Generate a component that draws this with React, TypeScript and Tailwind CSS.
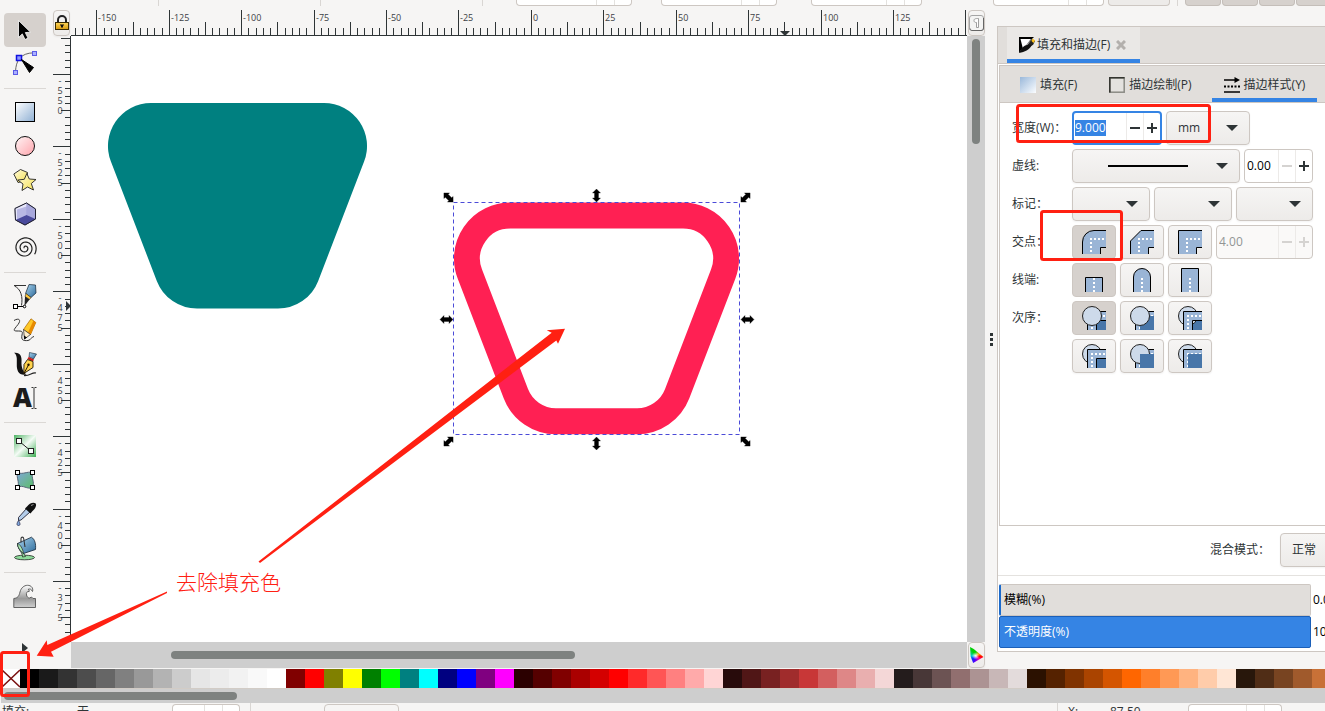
import { useEffect, useRef } from 'react'
import type { ReactNode } from 'react'
import clsx from 'clsx'

const PALETTE = [
  '#000000', '#1a1a1a', '#333333', '#4d4d4d', '#666666', '#808080', '#999999', '#b3b3b3', '#cccccc', '#e6e6e6',
  '#ececec', '#f2f2f2', '#f9f9f9', '#ffffff', '#800000', '#ff0000', '#808000', '#ffff00', '#008000', '#00ff00',
  '#008080', '#00ffff', '#000080', '#0000ff', '#800080', '#ff00ff', '#2b0000', '#550000', '#800000', '#aa0000',
  '#d40000', '#ff0000', '#ff2a2a', '#ff5555', '#ff8080', '#ffaaaa', '#ffd5d5', '#280b0b', '#501616', '#782121',
  '#a02c2c', '#c83737', '#d35f5f', '#de8787', '#e9afaf', '#f4d7d7', '#241c1c', '#483737', '#6c5353', '#916f6f',
  '#ac9393', '#c8b7b7', '#e3dbdb', '#2b1100', '#552200', '#803300', '#aa4400', '#d45500', '#ff6600', '#ff7f2a',
  '#ff9955', '#ffb380', '#ffccaa', '#ffe6d5', '#28170b', '#502d16', '#784421', '#a05a2c', '#c87137', '#d38d5f',
]

// 2.5mm per tick
const TICK = 7.243
const TRAPEZOID =
  'M151 103H324A43 43 0 0 1 364.1 161.6L318.1 281.200A43 43 0 0 1 278 308.600H197A43 43 0 0 1 156.9 281.200L110.9 161.6A43 43 0 0 1 151 103Z'

// Archimedean spiral, clockwise from the centre
const SPIRAL = Array.from({ length: 91 }, (_, i) => {
  const turn = (i / 90) * ((2.55 + 0.07) * Math.PI * 2) + 0.05
  const r = 0.6 + (i / 90) * 10.9
  const a = turn + Math.PI * 0.93
  return `${(12 + r * Math.cos(a)).toFixed(2)},${(12 + r * Math.sin(a)).toFixed(2)}`
}).join(' ')

const BUTTON = 'rounded border border-[#cdc7c2] bg-linear-to-b from-[#f6f5f4] to-[#edebe9] shadow-xs'

/* ---------- tool icons ---------- */

const tools: ({ name: string; icon: ReactNode } | null)[] = [
  {
    name: '选择',
    icon: <path d="M5.500 2.500v17l3.800-3.600 2.700 5.600 3-1.400-2.700-5.500 5.200-.4z" fill="#000" stroke="#fff" strokeWidth=".8" />,
  },
  {
    name: '节点',
    icon: (
      <>
        <path d="M2.500 19.500C3 9 7 1 21 .8" fill="none" stroke="#666" />
        <g fill="#aab0ff" stroke="#5b5be6">
          <rect x="19.500" y="-.5" width="4" height="4" />
          <rect x=".5" y="18.500" width="4" height="4" />
          <rect x="3.500" y="3.500" width="5" height="5" fill="#8d97ff" stroke="#1010e0" strokeWidth="1.500" />
        </g>
        <path d="M8.500 7.500 20.500 15.500 16.500 20.500Z" fill="#000" stroke="#000" />
      </>
    ),
  },
  null,
  { name: '矩形', icon: <rect x="2.500" y="2.500" width="19" height="19" fill="url(#blue)" stroke="#000" /> },
  { name: '圆形', icon: <circle cx="12" cy="12" r="9.500" fill="url(#pink)" stroke="#111" /> },
  {
    name: '星形',
    icon: (
      <g fill="url(#yellow)" stroke="#222" strokeWidth=".9" strokeLinejoin="round">
        <path d="M.8 6 7.500 1.500 14.500 4.500 13.500 12.500 5 14.500Z" />
        <path d="M13.800 5.500 16.300 11 23 11.500 18.300 15.500 20.500 22 14.500 19 9 22.500 10 16 4.800 12 11.300 11.300Z" />
      </g>
    ),
  },
  {
    name: '3D 盒子',
    icon: (
      <g stroke="#223" strokeWidth=".7" strokeLinejoin="round">
        <path d="M2 6.500 13.500 1 22.500 7 22.500 17 12 23 2.500 18Z" fill="#b8b8e6" />
        <path d="M2 6.500 13.500 1V13L2.500 18Z" fill="#e6e6fa" stroke="none" />
        <path d="M13.500 1 22.500 7V17L13.500 13Z" fill="#a8a8dc" stroke="none" />
        <path d="M2.500 18 13.500 13 22.500 17 12 23Z" fill="#4a4a9c" stroke="none" />
        <path d="M4 7.500 13.500 4.500V13L4 17.500Z" fill="#7474c4" fillOpacity=".4" stroke="none" />
        <path d="M2 6.500 13.500 1 22.500 7 22.500 17 12 23 2.500 18Z" fill="none" strokeWidth="1" />
      </g>
    ),
  },
  { name: '螺旋', icon: <polyline points={SPIRAL} fill="none" stroke="#222" strokeWidth="1.200" /> },
  null,
  {
    name: '钢笔',
    icon: (
      <>
        <path d="M1 1.500H13M1.500 2C8 5 10 13 8.500 21.500" fill="none" stroke="#333" />
        <path d="M16 .5 22.500 1 23 9 18 13.500 12.500 9.500Z" fill="url(#steel)" stroke="#123" strokeWidth=".7" />
        <path d="M13 9.500 18 13.500 16.500 15.500 12 12.500Z" fill="#ffc83a" stroke="#222" strokeWidth=".6" />
        <path d="M12 12.500 16.500 15.500 11.500 22Z" fill="#222" />
        <path d="M3 22.500H11" stroke="#000" />
        <rect x="0.500" y="20.500" width="4" height="4" fill="#fff" stroke="#000" />
        <circle cx="11.500" cy="22.500" r="1.300" fill="#fff" stroke="#000" />
      </>
    ),
  },
  {
    name: '铅笔',
    icon: (
      <>
        <path d="M1 2.500C6-.5 8.500 2 5 6.500S-1 13 4 13s6 0 5 4c-1 5 1 6 6 5.500 3-.3 3.500-4 6-4" fill="none" stroke="#333" />
        <path d="M18 .8 22.800 4.500 17.500 16.500 10.500 11.500Z" fill="#ffc928" stroke="#a66300" strokeWidth=".7" />
        <path d="M20.500 2.500 22.800 4.500 17.500 16.500 15 14.500Z" fill="#e88a00" />
        <path d="M10.500 11.500 17.500 16.500 11.500 21Z" fill="#ffeecb" stroke="#222" strokeWidth=".7" />
        <path d="M11 17.500 14 19.500 11.200 21.500Z" fill="#000" />
      </>
    ),
  },
  {
    name: '书法',
    icon: (
      <>
        <path d="M1 .8C7 0 9 4 8.500 10c-.3 5 1.500 10 5 12.500C6 24 3.500 19 3.800 12 4 6 4 3 1 .8Z" fill="#111" />
        <path d="M11 23.500c6 .5 8-3.500 12-2.500" fill="none" stroke="#222" strokeWidth="1.200" />
        <path d="M16.500.5 23.500 2 20.500 7 16 5Z" fill="url(#steel)" stroke="#123" strokeWidth=".6" />
        <path d="M15.500 5 21 7.500 20 9.500 14.500 7Z" fill="#d01818" />
        <path d="M14.500 7.500 20 9.500 20 15.500 10.800 21.500 11 12.500Z" fill="#ffd34d" stroke="#221600" strokeWidth=".9" />
        <path d="M11 21.300 15.500 13" stroke="#221600" />
        <circle cx="15.500" cy="12.800" r="1.200" fill="#221600" />
      </>
    ),
  },
  {
    name: '文本',
    icon: (
      <>
        <text x="0" y="21" fontSize="26" fontWeight="800" fontFamily="Open Sans" fill="#1c1c1c">A</text>
        <path d="M18.500 1.500H20.500M21.500 1.500H23.500M21 2V22M18.500 22.500H20.500M21.500 22.500H23.500" stroke="#333" />
      </>
    ),
  },
  null,
  {
    name: '渐变',
    icon: (
      <>
        <rect x="1" y="1" width="22" height="22" fill="url(#green)" />
        <path d="M6.500 7.500 18.500 17.500" stroke="#222" />
        <g fill="#fff" stroke="#222">
          <rect x="3.500" y="4.500" width="5" height="5" />
          <rect x="15.500" y="14.500" width="5" height="5" />
        </g>
      </>
    ),
  },
  {
    name: '网格',
    icon: (
      <>
        <path d="M4.500 4.500C10 7 14 3 19.500 4.500 18 10 22 14 19.500 19.500 14 22 10 16 4.500 19.500 7 14 3 10 4.500 4.500Z" fill="url(#mesh)" stroke="#567" />
        <g fill="#fff" stroke="#000">
          <rect x="2.500" y="2.500" width="4" height="4" />
          <rect x="17.500" y="2.500" width="4" height="4" />
          <rect x="2.500" y="17.500" width="4" height="4" />
          <rect x="17.500" y="17.500" width="4" height="4" />
        </g>
      </>
    ),
  },
  {
    name: '取色',
    icon: (
      <>
        <path d="M13.500 6.500 17 10 8 18 5.500 18.500 5.500 15.500Z" fill="#b4cdea" stroke="#223" strokeWidth=".9" />
        <path d="M12 6.500 14.500 4C15.500 2 20-.5 22.500 1.200 24.500 4 21 8 19.500 9L17.500 11.500Z" fill="#111" />
        <path d="M18 3.500 20.500 2.500" stroke="#999" />
        <path d="M5.500 18.500C7.500 21.500 7.500 23.500 5.500 23.500S3.500 21.500 5.500 18.500Z" fill="#7fa6dc" stroke="#224" strokeWidth=".7" />
      </>
    ),
  },
  {
    name: '油漆桶',
    icon: (
      <>
        <ellipse cx="11.500" cy="21.500" rx="10" ry="2.300" fill="#8fdc9c" stroke="#222" strokeWidth=".8" />
        <path d="M4.500 7.500C6 12 8.500 15.500 10.500 17L12.500 20.500 9.500 21C10 17 5 14 4.500 7.500Z" fill="#8fdc9c" stroke="#222" strokeWidth=".7" />
        <path d="M4.500 7.500 18.500 1.200C22 3.500 23 8 22.500 13.500L10.500 17.500C7 15 4.500 11 4.500 7.500Z" fill="url(#steel)" stroke="#123" strokeWidth=".8" />
        <path d="M4.500 7.500C7 8 10 13 10.500 17.500 7 15 4.500 11 4.500 7.500Z" fill="#a7e6b0" stroke="#222" strokeWidth=".7" />
        <path d="M8 6.500V3C8 .5 10.500.5 10.800 3L12 11" fill="none" stroke="#333" strokeWidth="1.100" />
      </>
    ),
  },
  null,
  {
    name: '调整',
    icon: (
      <path
        d="M.8 23.500V14.500C5 14 6 12 7 8 8 4 11 1.300 14.500 1.300c4 0 6 3 5 6.200C18.500 5 16.500 4.500 15 5.500c1 .3 1.500 1 1.200 2C14 7 13 9 13.500 11c.4 1.800 1.500 3 3 3l2-1 1.500 1.500H22.500V23.500Z"
        fill="url(#grey)"
        stroke="#555"
        strokeWidth=".9"
      />
    ),
  },
]

function SharedGradients() {
  return (
    <svg className="absolute size-0" aria-hidden="true">
      <defs>
        <linearGradient id="blue" x1="0" y1="0" x2="1" y2="1">
          <stop offset="0" stopColor="#ffffff" />
          <stop offset="1" stopColor="#8fb0d4" />
        </linearGradient>
        <linearGradient id="blueDown" x1="0" y1="0" x2="1" y2="1">
          <stop offset="0" stopColor="#9ab8da" />
          <stop offset="1" stopColor="#fbfdff" />
        </linearGradient>
        <linearGradient id="pink" x1="0" y1="0" x2="1" y2="1">
          <stop offset="0" stopColor="#fff5f5" />
          <stop offset="1" stopColor="#ffa4ac" />
        </linearGradient>
        <linearGradient id="yellow" x1="0" y1="0" x2="1" y2="1">
          <stop offset="0" stopColor="#fffbe0" />
          <stop offset="1" stopColor="#f5e04e" />
        </linearGradient>
        <linearGradient id="steel" x1="0" y1="0" x2="1" y2="1">
          <stop offset="0" stopColor="#a9d4ee" />
          <stop offset="1" stopColor="#2d6a9a" />
        </linearGradient>
        <linearGradient id="green" x1="0" y1="0" x2="1" y2="1">
          <stop offset="0" stopColor="#4fb465" />
          <stop offset=".5" stopColor="#f4fbf5" />
          <stop offset="1" stopColor="#3fae55" />
        </linearGradient>
        <linearGradient id="mesh" x1="0" y1="0" x2="1" y2="1">
          <stop offset="0" stopColor="#7fa6d8" />
          <stop offset="1" stopColor="#5cbf68" />
        </linearGradient>
        <linearGradient id="grey" x1="0" y1="0" x2="0" y2="1">
          <stop offset="0" stopColor="#ffffff" />
          <stop offset=".6" stopColor="#999999" />
          <stop offset="1" stopColor="#d0d0d0" />
        </linearGradient>
        <linearGradient id="gold" x1="0" y1="0" x2="0" y2="1">
          <stop offset="0" stopColor="#ffd75a" />
          <stop offset="1" stopColor="#d79a10" />
        </linearGradient>
      </defs>
    </svg>
  )
}

function Toolbox() {
  return (
    <nav className="flex w-[53px] shrink-0 flex-col pt-[7px] pr-[7px] pl-1">
      {tools.map((tool, i) =>
        tool ? (
          <button
            key={tool.name}
            aria-label={tool.name}
            className={clsx('flex h-[34px] shrink-0 items-center justify-center rounded', i === 0 && 'bg-[#d6d1cd]')}
          >
            <svg width="24" height="24" viewBox="0 0 24 24" className="overflow-visible">
              {tool.icon}
            </svg>
          </button>
        ) : (
          <hr key={i} className="mt-[7px] mb-1.5 h-px shrink-0 border-0 bg-[#dbd8d5]" />
        ),
      )}
      <button aria-label="更多工具" className="mt-[26px] flex shrink-0 justify-center py-1">
        <svg width="6" height="10" viewBox="0 0 6 10">
          <path d="M0 0 6 5 0 10Z" fill="#2e3436" />
        </svg>
      </button>
    </nav>
  )
}

/* ---------- rulers ---------- */

const tickStart = (k: number, major: number, mid: number, minor: number) =>
  k % 10 === 0 ? major : k % 5 === 0 ? mid : minor

function HorizontalRuler() {
  const ticks = Array.from({ length: 260 }, (_, i) => i - 63)
  return (
    <svg className="h-[26px] min-w-0 flex-1 text-[9px]" aria-hidden="true">
      {ticks.map(k => {
        const x = Math.floor(460.4 + k * TICK)
        const top = tickStart(k, 0, 12, 18)
        return (
          <g key={k}>
            <rect x={x} y={top} width="1" height={26 - top} fill="#2e3436" />
            {k % 10 === 0 && Math.abs(k * 2.5) <= 150 && k < 60 && (
              <text x={x + 2} y="11" fill="#3c4144">{k * 2.5}</text>
            )}
          </g>
        )
      })}
      <rect x="0" y="25" width="100%" height="1" fill="#2e3436" />
      <path d="M709 21H719L714 26Z" fill="#2e3436" />
    </svg>
  )
}

function VerticalRuler() {
  const ticks = Array.from({ length: 180 }, (_, i) => i - 5)
  return (
    <svg className="h-full w-[18px] shrink-0 text-[9px]" aria-hidden="true">
      {ticks.map(k => {
        const y = Math.floor(38.5 + k * TICK)
        const left = tickStart(k, 0, 8, 12)
        return (
          <g key={k}>
            <rect x={left} y={y} width={18 - left} height="1" fill="#2e3436" />
            {k % 10 === 0 && k <= 70 &&
              String(-550 + k * 2.5).split('').map((c, i) => (
                <text key={i} x="7" y={y + 10 + i * 10} textAnchor="middle" fill="#3c4144">{c}</text>
              ))}
          </g>
        )
      })}
      <rect x="17" y="0" width="1" height="100%" fill="#2e3436" />
      <path d="M13 265V275L18 270Z" fill="#2e3436" />
    </svg>
  )
}

/* ---------- canvas ---------- */

const handles = [
  [448.5, 197.5, -45], [596.5, 195.5, 0], [745.5, 197.5, 45],
  [446.5, 319.5, 90], [747.5, 319.5, 90],
  [448.5, 441.5, 45], [596.5, 443.5, 0], [745.5, 441.5, -45],
]

function Canvas() {
  return (
    <svg className="h-full min-w-0 flex-1 bg-white" role="img" aria-label="画布">
      <g transform="translate(-71 -36)">
        <path d={TRAPEZOID} fill="#008080" />
        <path d={TRAPEZOID} transform="translate(359 112.600)" fill="none" stroke="#ff2053" strokeWidth="26" />
        <rect x="453.500" y="202.500" width="286" height="232" fill="none" stroke="#4b4bd8" strokeDasharray="4 3" />
        {handles.map(([x, y, r], i) => (
          <path
            key={i}
            transform={`translate(${x} ${y}) rotate(${r})`}
            d="M0-6.500 4-2.500H2V2.500H4L0 6.500-4 2.500H-2V-2.500H-4Z"
            fill="#000"
            stroke="#000"
            strokeWidth=".3"
          />
        ))}
      </g>
    </svg>
  )
}

function CanvasArea() {
  return (
    <main className="mb-px flex min-w-0 flex-1 flex-col pt-1">
      <div className="flex h-[26px] shrink-0">
        <button aria-label="锁定参考线" className={clsx(BUTTON, 'mr-px flex w-[17px] shrink-0 items-center justify-center')}>
          <svg width="14" height="16" viewBox="0 0 14 16" className="shrink-0">
            <path d="M3 8V5a4 4 0 0 1 8 0V8" fill="none" stroke="#222" strokeWidth="2" />
            <rect x=".5" y="7.500" width="13" height="7" fill="url(#gold)" stroke="#3a2c00" />
            <path d="M6 9.500H8V12.500H6ZM5 9.500H9V10.500H5Z" fill="#111" />
          </svg>
        </button>
        <HorizontalRuler />
        <button aria-label="粘滞缩放" className={clsx(BUTTON, 'ml-px flex w-[17px] shrink-0 items-center justify-center')}>
          <svg width="15" height="16" viewBox="0 0 15 16" className="shrink-0">
            <rect x=".5" y=".5" width="14" height="15" rx="2.500" fill="#f4f4f3" stroke="#a5a5a5" />
            <path d="M1 13.500C1 15 2 15.500 3 15.500H12C13.500 15.500 14.500 15 14.500 13V3" fill="none" stroke="#666" />
            <path d="M5 5.500C5 4 6 3.500 9.500 3.500V12.500H7.500V7.500C6 7.500 5 7 5 5.500Z" fill="#fff" stroke="#888" strokeWidth=".8" />
          </svg>
        </button>
      </div>
      <div className="flex min-h-0 flex-1">
        <VerticalRuler />
        <Canvas />
        <div className="w-[18px] shrink-0 bg-[#cecece] px-[5px] pt-[3px]">
          <div className="h-[105px] rounded-full bg-[#7e8280]" />
        </div>
      </div>
      <div className="flex h-[26px] shrink-0">
        <div className="w-[18px] shrink-0" />
        <div className="flex min-w-0 flex-1 items-center bg-[#cecece] pl-[100px]">
          <div className="h-2 w-[404px] rounded-full bg-[#7e8280]" />
        </div>
        <button aria-label="色彩管理" className={clsx(BUTTON, 'ml-px flex w-[17px] shrink-0 items-center justify-center')}>
          <span className="h-4 w-3.5 shrink-0 bg-[radial-gradient(circle_at_40%_55%,white,transparent_30%),conic-gradient(from_0deg_at_40%_55%,#00d000,#ffb000_60deg,#ff0000_100deg,#ff00a0_130deg,#5000ff_190deg,#0030ff_225deg,#00d0d0_270deg,#00d000_330deg)] [clip-path:polygon(4%_0,30%_12%,100%_62%,26%_100%,8%_60%)]" />
        </button>
      </div>
    </main>
  )
}

/* ---------- fill and stroke panel ---------- */

interface SelectBoxProps {
  label: string
  value?: string
  className: string
  children?: ReactNode
}

function SelectBox({ label, value = '', className, children }: SelectBoxProps) {
  return (
    <div className={clsx('relative h-[34px]', className)}>
      <select aria-label={label} className={clsx(BUTTON, 'h-full w-full appearance-none pl-[11px] text-xs')}>
        <option>{value}</option>
      </select>
      {children}
      <svg width="12" height="6" viewBox="0 0 12 6" className="pointer-events-none absolute top-3.5 right-3">
        <path d="M0 0H12L6 6Z" fill="#2e3436" />
      </svg>
    </div>
  )
}

interface SpinProps {
  label: string
  value: string
  className: string
  focused?: boolean
  disabled?: boolean
  minusOff?: boolean
}

function SpinBox({ label, value, className, focused, disabled, minusOff }: SpinProps) {
  const ref = useRef<HTMLInputElement>(null)

  useEffect(() => {
    if (focused) ref.current?.select()
  }, [focused])

  return (
    <div
      className={clsx(
        'flex h-[34px] overflow-hidden rounded',
        focused ? 'border-2 border-[#3584e4] bg-white' : 'border border-[#cdc7c2]',
        disabled ? 'bg-[#faf9f8] text-[#929595]' : 'bg-white text-black',
        className,
      )}
    >
      <input
        ref={ref}
        aria-label={label}
        defaultValue={value}
        disabled={disabled}
        className={clsx('min-w-0 flex-1 text-xs outline-none selection:bg-[#3584e4] selection:text-white', focused ? 'pl-px' : 'pl-0.5')}
      />
      <button
        aria-label="减少"
        disabled={disabled || minusOff}
        className="flex w-[17px] shrink-0 items-center justify-center border-l border-[#eceae8] text-[#2e3436] disabled:text-[#d5d3d1]"
      >
        <svg width="10" height="10" viewBox="0 0 10 10"><path d="M0 5H10" stroke="currentColor" strokeWidth="2" /></svg>
      </button>
      <button
        aria-label="增加"
        disabled={disabled}
        className="flex w-[17px] shrink-0 items-center justify-center border-l border-[#eceae8] text-[#2e3436] disabled:text-[#d5d3d1]"
      >
        <svg width="10" height="10" viewBox="0 0 10 10"><path d="M0 5H10M5 0V10" stroke="currentColor" strokeWidth="2" /></svg>
      </button>
    </div>
  )
}

function IconToggle({ label, active, children }: { label: string; active?: boolean; children: ReactNode }) {
  return (
    <button
      aria-label={label}
      aria-pressed={!!active}
      className={clsx(
        'flex h-[34px] w-11 items-center justify-center',
        active ? 'rounded border border-[#cdc7c2] bg-[#d6d1cd]' : BUTTON,
      )}
    >
      <svg width="24" height="24" viewBox="0 0 24 24">{children}</svg>
    </button>
  )
}

function JoinIcon({ outline }: { outline: string }) {
  return (
    <>
      <path d={`${outline}H24V17.500H18.500V24H.5Z`} fill="#9ab5d6" />
      <path d={`${outline}H24M24 17.500H18.500V24`} fill="none" stroke="#000" />
      <path d="M8 9H24M9 12V24" stroke="#fff" strokeWidth="2" strokeDasharray="2 2" />
    </>
  )
}

function CapIcon({ outline }: { outline: string }) {
  return (
    <>
      <path d={outline} fill="#9ab5d6" stroke="#000" />
      <path d="M12 10V24" stroke="#fff" strokeWidth="2" strokeDasharray="2 2" />
    </>
  )
}

const layers: Record<string, ReactNode> = {
  F: <rect key="F" x="10" y="10" width="14" height="14" fill="#4876a9" />,
  S: (
    <g key="S">
      <path d="M5.500 24V5.500H24V14.500H14.500V24Z" fill="#9ab5d6" />
      <path d="M5.500 24V5.500H24M24 14.500H14.500V24" fill="none" stroke="#000" />
      <path d="M9 10H24M10 13V24" stroke="#fff" strokeWidth="2" strokeDasharray="2 2" />
    </g>
  ),
  M: <circle key="M" cx="10" cy="10" r="9.500" fill="#cddaea" stroke="#222" />,
}

function OrderToggle({ order, active }: { order: string; active?: boolean }) {
  return (
    <IconToggle label={`次序 ${order}`} active={active}>
      {order.split('').map(l => layers[l])}
    </IconToggle>
  )
}

function Row({ label, children }: { label: string; children: ReactNode }) {
  return (
    <div className="flex items-center">
      <span className="w-[60px] shrink-0 whitespace-nowrap">{label}</span>
      <div className="flex gap-1">{children}</div>
    </div>
  )
}

function StrokeStyle() {
  return (
    <div className="flex flex-1 flex-col gap-1 py-2 pl-3">
      <Row label="宽度(W)：">
        <SpinBox label="宽度" value="9.000" className="w-[90px]" focused />
        <SelectBox label="单位" value="mm" className="w-[84px]" />
      </Row>
      <Row label="虚线:">
        <SelectBox label="虚线" className="w-[168px]">
          <svg width="80" height="2" className="pointer-events-none absolute top-4 left-9">
            <rect width="80" height="2" />
          </svg>
        </SelectBox>
        <SpinBox label="虚线偏移" value="0.00" className="w-[69px]" minusOff />
      </Row>
      <Row label="标记：">
        <SelectBox label="起始标记" className="w-[78px]" />
        <SelectBox label="中间标记" className="w-[78px]" />
        <SelectBox label="末端标记" className="w-[77px]" />
      </Row>
      <Row label="交点：">
        <IconToggle label="圆角" active><JoinIcon outline="M.5 24V12A11.500 11.500 0 0 1 12 .5" /></IconToggle>
        <IconToggle label="斜角"><JoinIcon outline="M.5 24V11L11 .5" /></IconToggle>
        <IconToggle label="尖角"><JoinIcon outline="M.5 24V.5" /></IconToggle>
        <SpinBox label="尖角限制" value="4.00" className="w-[97px]" disabled />
      </Row>
      <Row label="线端:">
        <IconToggle label="平头" active><CapIcon outline="M3.500 24V9.500H20.500V24" /></IconToggle>
        <IconToggle label="圆头"><CapIcon outline="M3.500 24V9A8.500 8.500 0 0 1 20.500 9V24" /></IconToggle>
        <IconToggle label="方头"><CapIcon outline="M3.500 24V.5H20.500V24" /></IconToggle>
      </Row>
      <Row label="次序：">
        <OrderToggle order="FSM" active />
        <OrderToggle order="SFM" />
        <OrderToggle order="FMS" />
      </Row>
      <Row label="">
        <OrderToggle order="MFS" />
        <OrderToggle order="SMF" />
        <OrderToggle order="MSF" />
      </Row>
    </div>
  )
}

const tabs = [
  { name: '填充(F)', icon: <rect width="16" height="16" fill="url(#blueDown)" /> },
  {
    name: '描边绘制(P)',
    icon: (
      <>
        <rect x=".8" y=".8" width="14.400" height="14.400" fill="#e4e2df" stroke="#8a8a84" strokeWidth="1.500" />
        <path d="M.8 15.500V.8H15.500" fill="none" stroke="#33342f" strokeWidth="1.500" />
      </>
    ),
  },
  {
    name: '描边样式(Y)',
    icon: (
      <>
        <path d="M0 3H12M0 15H16" stroke="#000" strokeWidth="1.500" />
        <path d="M10.500 0 16 3 10.500 6Z" />
        <path d="M0 9.500H16" stroke="#000" strokeWidth="2" strokeDasharray="2 1.500" />
      </>
    ),
  },
]

function FillStrokePanel() {
  return (
    <aside className="mt-5 mb-[17px] flex w-[328px] shrink-0 flex-col overflow-hidden border-y border-l border-[#cdc7c2] bg-white">
      <div className="flex h-[37px] shrink-0 border-b border-[#cdc7c2] bg-[#e1dedb] pl-[9px]">
        <div className="flex items-center border-b-4 border-[#3584e4] bg-[#eae8e6] pt-1 pr-3.5 pl-3">
          <svg width="16" height="16" viewBox="0 0 16 16" className="mr-0.5">
            <path d="M0 0H15L11 4 2 13 0 16Z" fill="#000" />
            <path d="M1.500 2H12L4 12Z" fill="#fff" />
            <path d="M13 2 16 4 14 8 6 11Z" fill="#222" />
            <path d="M13.500 1.500 16 3.500 14.500 6 12.500 4Z" fill="#ffc21a" />
            <path d="M0 16C3 9 7 7 13 8 10 13 6 15 0 16Z" fill="#111" />
          </svg>
          <span>填充和描边(F)</span>
          <button aria-label="关闭" className="ml-1.5">
            <svg width="10" height="10" viewBox="0 0 10 10"><path d="M1 1 9 9M9 1 1 9" stroke="#b3b0ad" strokeWidth="3" /></svg>
          </button>
        </div>
      </div>
      <section className="mt-px ml-px flex min-h-0 flex-1 flex-col border-y border-l border-[#cdc7c2]">
        <div role="tablist" className="flex h-[37px] shrink-0 gap-2 border-b border-[#cdc7c2] bg-[#e1dedb] pl-2">
          {tabs.map((tab, i) => (
            <button
              key={tab.name}
              role="tab"
              aria-selected={i === 2}
              className={clsx('flex items-center gap-1 border-b-4 px-3 pt-1.5 whitespace-nowrap', i === 2 ? 'border-[#3584e4]' : 'border-transparent')}
            >
              <svg width="16" height="16" viewBox="0 0 16 16">{tab.icon}</svg>
              {tab.name}
            </button>
          ))}
        </div>
        <StrokeStyle />
      </section>
      <div className="flex shrink-0 items-center justify-end border-b border-[#e4e2df] pt-[7px] pb-2">
        <label htmlFor="blend" className="mr-2.5">混合模式：</label>
        <select id="blend" className={clsx(BUTTON, '-mr-6 h-[34px] w-[69px] appearance-none pl-[11px] text-xs')}>
          <option>正常</option>
        </select>
      </div>
      <div className="mt-2 mb-[3px] ml-px shrink-0 text-black">
        <div className="flex h-8 items-center">
          <div className="flex h-full w-[312px] shrink-0 items-center rounded-xs border border-l-2 border-[#cdc7c2] border-l-[#1b6acb] bg-[#e1dedb] pl-[3px]">
            模糊(%)
          </div>
          <span className="ml-0.5">0.0</span>
        </div>
        <div className="flex h-8 items-center">
          <div className="flex h-full w-[312px] shrink-0 items-center rounded-xs border border-[#1b5fb8] bg-[#3584e4] pl-1 text-white">
            不透明度(%)
          </div>
          <span className="ml-0.5">100.0</span>
        </div>
      </div>
    </aside>
  )
}

/* ---------- clipped bars at the window edges ---------- */

function TopBar() {
  return (
    <div className="flex h-1.5 shrink-0 overflow-hidden">
      <i className="ml-[158px] w-px shrink-0 bg-[#d9d6d3]" />
      <i className="ml-[161px] w-px shrink-0 bg-[#d9d6d3]" />
      <i className="ml-[161px] w-px shrink-0 bg-[#d9d6d3]" />
      <EntryEdge className="ml-[33px] w-[116px] rounded-b border-b" />
      <EntryEdge className="ml-[29px] w-[116px] rounded-b border-b" />
      <EntryEdge className="ml-[34px] w-[111px] rounded-b border-b" />
      <EntryEdge className="ml-[71px] w-[111px] rounded-b border-b" />
      <i className="ml-1 w-[62px] shrink-0 rounded-b border-x border-b border-[#cdc7c2] bg-[#edebe9]" />
      <i className="ml-[7px] w-px shrink-0 bg-[#d9d6d3]" />
      <div className="ml-[7px] flex shrink-0 gap-px">
        {[0, 1, 2, 3].map(i => (
          <i key={i} className="w-9 shrink-0 rounded-b border-x border-b border-[#c4beb9] bg-[#d6d1cd]" />
        ))}
      </div>
    </div>
  )
}

function EntryEdge({ className }: { className: string }) {
  return (
    <div className={clsx('flex shrink-0 justify-end border-x border-[#cdc7c2] bg-white', className)}>
      <i className="w-[18px] border-l border-[#e4e2df]" />
      <i className="w-[17px] border-l border-[#e4e2df]" />
    </div>
  )
}

function Palette() {
  return (
    <div className="shrink-0">
      <div className="flex h-[19px] overflow-hidden pl-0.5">
        <button aria-label="无颜色" className="w-[18px] shrink-0 bg-white">
          <svg width="18" height="19" viewBox="0 0 18 19">
            <path d="M0 1 18 18M18 1 0 18" stroke="#7a1010" strokeWidth="1.600" />
          </svg>
        </button>
        {PALETTE.map((color, i) => (
          <button key={i} aria-label={color} className="w-[19px] shrink-0" style={{ backgroundColor: color }} />
        ))}
      </div>
      <div className="ml-px h-[15px] border-t border-[#d2ccc6] bg-[#cecece] pt-[3px] pl-[3px]">
        <div className="h-2 w-[233px] rounded-full bg-[#7e8280]" />
      </div>
    </div>
  )
}

function StatusBar() {
  return (
    <footer className="flex h-2 shrink-0 items-start overflow-hidden pl-0.5 leading-4">
      <span className="w-[75px] shrink-0 pt-px">填充:</span>
      <span className="w-[95px] shrink-0 pt-px">无</span>
      <EntryEdge className="mt-px h-4 w-[68px] rounded-t border-t" />
      <i className="ml-2.5 h-4 w-px shrink-0 bg-[#d9d6d3]" />
      <i className="mt-px ml-[73px] h-4 w-[75px] shrink-0 rounded-t border border-[#cdc7c2] bg-[#f6f5f4]" />
      <div className="ml-auto flex shrink-0 items-start pr-[43px]">
        <i className="h-4 w-px bg-[#d9d6d3]" />
        <span className="ml-2.5 w-[42px] pt-px">X:</span>
        <span className="w-[78px] pt-px">87.50</span>
        <EntryEdge className="mt-px h-4 w-[94px] rounded-t border-t" />
      </div>
    </footer>
  )
}

function Annotations() {
  return (
    <svg className="pointer-events-none absolute inset-0 size-full">
      <g fill="#ff2012">
        <path d="M258.500 561.500 551.700 332.700 546.700 330.300 565 328.700 558 343.700 556.300 340.500 260 563Z" />
        <path d="M167 591.500 47.300 645 46.700 640.300 36.700 655.700 53.700 656.700 51 651.700 167 593Z" />
        <text x="176" y="590" fontSize="21" fontWeight="300">去除填充色</text>
      </g>
      <g fill="none" stroke="#ff2012" strokeWidth="3">
        <rect x="1017.500" y="105.500" width="192" height="36" rx="2" />
        <rect x="1041.500" y="211.500" width="80" height="48" rx="2" />
        <rect x="1.500" y="652.500" width="27" height="43" rx="2" />
      </g>
    </svg>
  )
}

export default function App() {
  return (
    <div className="relative flex h-screen flex-col overflow-hidden bg-[#f6f5f4] font-['Open_Sans','Noto_Sans_CJK_SC',sans-serif] text-xs text-[#2e3436]">
      <SharedGradients />
      <TopBar />
      <div className="flex min-h-0 flex-1">
        <Toolbox />
        <CanvasArea />
        <div className="flex w-3 shrink-0 flex-col items-center justify-center gap-0.5 pt-1">
          <i className="size-[3px] bg-[#2e3436]" />
          <i className="size-[3px] bg-[#2e3436]" />
          <i className="size-[3px] bg-[#2e3436]" />
        </div>
        <FillStrokePanel />
      </div>
      <Palette />
      <StatusBar />
      <Annotations />
    </div>
  )
}
